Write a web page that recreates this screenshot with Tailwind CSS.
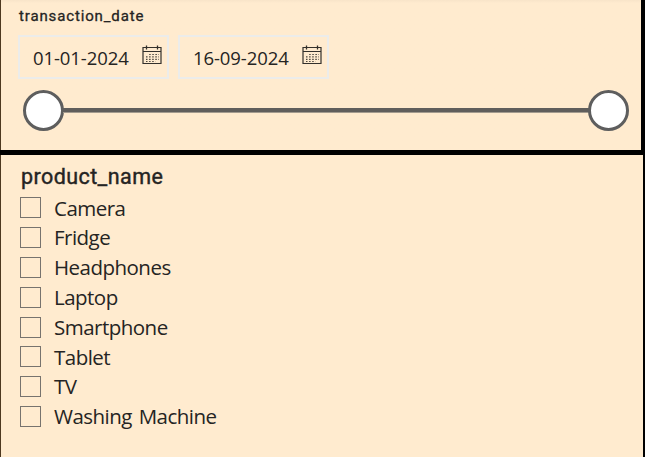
<!DOCTYPE html>
<html lang="en">
<head>
<meta charset="utf-8">
<title>Filters</title>
<script src="https://cdn.jsdelivr.net/npm/@tailwindcss/browser@4"></script>
</head>
<body class="h-[457px] w-[645px] overflow-hidden bg-[#ffebcf] text-[#252423]">
<svg class="hidden">
  <symbol id="calendar" viewBox="0 0 20 20">
    <path d="M1 2.5H19V18.5H1ZM1 6.5H19" fill="none" stroke="#33302b" stroke-width="1.2"/>
    <path d="M4.500 0.500V4.500M15.500 0.500V4.500" stroke="#33302b" stroke-width="1.300"/>
    <path d="M7.200 9.500H17M4 11.900H17M4 14.300H17M4 16.500H13.500" stroke="#4a453d" stroke-width="1.200" stroke-dasharray="1.500 1.600"/>
  </symbol>
</svg>
<section class="flex h-[150px] flex-col border-l border-l-[#4d3820] border-r-4 border-r-black bg-linear-to-b from-[#f8e4c9] to-[#ffebcf] to-[3px] pl-[17px]">
  <h2 class="h-[35px] pt-[6px] pl-px font-['Roboto',sans-serif] text-[15px] leading-[20px] font-normal [-webkit-text-stroke:0.3px_#252423]"><span class="inline-block tracking-[0.86px]">transaction_date</span></h2>
  <div class="flex h-[44px] gap-[9px]">
    <div class="flex w-[151px] justify-between border-2 border-[#ececea] pr-[5px] pl-[13px]">
      <span class="pt-[7px] font-['Open_Sans',sans-serif] text-[18.5px] leading-[27px] tracking-[-0.08px] whitespace-nowrap">01-01-2024</span>
      <svg class="mt-[8px] h-5 w-5 shrink-0"><use href="#calendar"/></svg>
    </div>
    <div class="flex w-[151px] justify-between border-2 border-[#ececea] pr-[5px] pl-[13px]">
      <span class="pt-[7px] font-['Open_Sans',sans-serif] text-[18.5px] leading-[27px] tracking-[-0.08px] whitespace-nowrap">16-09-2024</span>
      <svg class="mt-[8px] h-5 w-5 shrink-0"><use href="#calendar"/></svg>
    </div>
  </div>
  <div class="mt-[10px] ml-[5px] flex h-[42px] w-[606px] items-center">
    <div class="h-[41px] w-[41px] shrink-0 rounded-full border-[3px] border-[#5e5e5e] bg-white"></div>
    <div class="-mx-px box-content h-[4px] grow border-b border-[#a39b8f] bg-[#605e5c]"></div>
    <div class="h-[41px] w-[41px] shrink-0 rounded-full border-[3px] border-[#5e5e5e] bg-white"></div>
  </div>
</section>
<div class="h-[5px] bg-black"></div>
<section class="h-[302px] border-l border-l-[#4d3820] border-r-2 border-r-black pl-[19px]">
  <h2 class="h-[38px] pt-[8px] pl-px font-['Roboto',sans-serif] text-[21.5px] leading-[28px] font-normal [-webkit-text-stroke:0.4px_#252423]"><span class="inline-block tracking-[0.42px]">product_name</span></h2>
  <ul class="font-['Open_Sans',sans-serif] text-[20.5px] leading-[30px] tracking-[-0.52px] [word-spacing:2px]">
    <li class="flex h-[29.8px] items-center gap-[13px]"><i class="size-[21px] border border-[#77736e]"></i><span class="pt-[0.4px]">Camera</span></li>
    <li class="flex h-[29.8px] items-center gap-[13px]"><i class="size-[21px] border border-[#77736e]"></i><span class="-mt-px">Fridge</span></li>
    <li class="flex h-[29.8px] items-center gap-[13px]"><i class="size-[21px] border border-[#77736e]"></i><span class="-mt-px">Headphones</span></li>
    <li class="flex h-[29.8px] items-center gap-[13px]"><i class="size-[21px] border border-[#77736e]"></i><span class="-mt-px">Laptop</span></li>
    <li class="flex h-[29.8px] items-center gap-[13px]"><i class="size-[21px] border border-[#77736e]"></i><span class="-mt-px">Smartphone</span></li>
    <li class="flex h-[29.8px] items-center gap-[13px]"><i class="size-[21px] border border-[#77736e]"></i><span class="pt-[0.4px]">Tablet</span></li>
    <li class="flex h-[29.8px] items-center gap-[13px]"><i class="size-[21px] border border-[#77736e]"></i><span class="-mt-px">TV</span></li>
    <li class="flex h-[29.8px] items-center gap-[13px]"><i class="size-[21px] border border-[#77736e]"></i><span class="-mt-px">Washing Machine</span></li>
  </ul>
</section>
</body>
</html>
